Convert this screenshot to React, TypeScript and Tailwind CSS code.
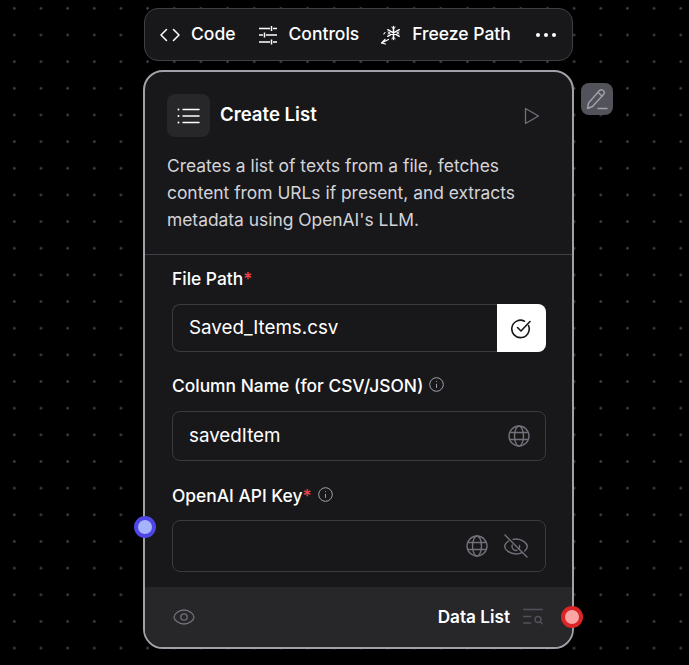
import React from "react";

function CodeIcon() {
  return (
    <svg width="20" height="20" viewBox="0 0 20 20" fill="none" stroke="currentColor" strokeWidth="1.500" strokeLinecap="round" strokeLinejoin="round">
      <path d="M6.500 4.500 1 10l5.500 5.500" />
      <path d="M13.500 4.500 19 10l-5.500 5.500" />
    </svg>
  );
}

function ControlsIcon() {
  return (
    <svg width="20" height="20" viewBox="0 0 20 20" fill="none" stroke="currentColor" strokeWidth="1.500">
      <path d="M1 3.500h11M15 3.500h4M13.500 1v5" />
      <path d="M1 10h4M8 10h11M6.500 7.500v5" />
      <path d="M1 17h11M15 17h4M13.500 14.500v5" />
    </svg>
  );
}

function FreezeIcon() {
  return (
    <svg width="21" height="20" viewBox="0 0 21 20" fill="none" stroke="currentColor" strokeWidth="1.500" strokeLinecap="round" strokeLinejoin="round">
      <path d="M13.500 1.500v13M7.800 4.700l11.400 6.600M19.200 4.700 7.800 11.300" />
      <path d="M11.800 2.300l1.700 1.400 1.700-1.400M11.800 13.700l1.700-1.400 1.700 1.400M8 7l2.300 1L8 9M19 7l-2.300 1 2.300 1" strokeWidth="1" />
      <path d="M8.500 14.500 1.500 18M1.500 18l3.500-3.500M1.500 18l4 1" strokeWidth="1.200" />
      <path d="M5 7.500 3.800 9" strokeWidth="1.100" />
    </svg>
  );
}

function ListIcon() {
  return (
    <svg width="24" height="24" viewBox="0 0 24 24" fill="none" stroke="currentColor" strokeWidth="1.500" strokeLinecap="round">
      <path d="M6 5.500h16M6 12h16M6 18.500h16" />
      <path d="M1.500 5.500h.01M1.500 12h.01M1.500 18.500h.01" strokeWidth="2" />
    </svg>
  );
}

function PlayIcon() {
  return (
    <svg width="16" height="18" viewBox="0 0 16 18" fill="none" stroke="currentColor" strokeWidth="1.300" strokeLinejoin="round">
      <path d="M1.500 1.500v15L14.500 9z" />
    </svg>
  );
}

function PencilIcon() {
  return (
    <svg width="24" height="24" viewBox="0 0 24 24" fill="none" stroke="currentColor" strokeWidth="1.400" strokeLinecap="round" strokeLinejoin="round">
      <path d="M2.500 21.500 3.500 16 14.500 3.500a2.400 2.400 0 0 1 3.400-.2l.6.500a2.400 2.400 0 0 1 .2 3.400L7.500 19.500z" />
      <path d="M13 5.500l4 3.500" />
      <path d="M13 21.500h9" />
    </svg>
  );
}

function CheckCircleIcon() {
  return (
    <svg width="21" height="21" viewBox="0 0 21 21" fill="none" stroke="#18181b" strokeWidth="1.600" strokeLinecap="round" strokeLinejoin="round">
      <path d="M17.500 7.500a8.700 8.700 0 1 1-4-4.300" />
      <path d="M6.500 9.500l3.500 3.500L19 3.500" />
    </svg>
  );
}

function InfoIcon() {
  return (
    <svg width="15" height="15" viewBox="0 0 15 15" fill="none" stroke="#a1a1aa" strokeWidth="1">
      <circle cx="7.500" cy="7.500" r="6.800" />
      <path d="M7.500 6.800v4" />
      <path d="M7.500 4.200v.8" />
    </svg>
  );
}

function GlobeIcon() {
  return (
    <svg width="22" height="22" viewBox="0 0 22 22" fill="none" stroke="#71717a" strokeWidth="1.400">
      <circle cx="11" cy="11" r="10" />
      <ellipse cx="11" cy="11" rx="4.500" ry="10" />
      <path d="M1.800 7.500h18.400M1.800 14.500h18.400" />
    </svg>
  );
}

function EyeOffIcon() {
  return (
    <svg width="26" height="26" viewBox="0 0 26 26" fill="none" stroke="#71717a" strokeWidth="1.400" strokeLinecap="round">
      <path d="M2 2l22 22" />
      <path d="M5.500 8C3.200 9.800 1.700 12 1.700 13.500c0 3 5 7.500 11.300 7.500 2.300 0 4.300-.5 6-1.400M10 6.400c1-.3 2-.4 3-.4 6.300 0 11.300 4.500 11.300 7.500 0 1.300-1 3-2.600 4.500" />
      <path d="M16.500 12.500A4 4 0 0 1 16 16M9.200 12a4 4 0 0 0 4.800 5.300" />
    </svg>
  );
}

function EyeIcon() {
  return (
    <svg width="22" height="16" viewBox="0 0 22 16" fill="none" stroke="#71717a" strokeWidth="1.300">
      <path d="M11 1C5.500 1 1 5.300 1 8s4.500 7 10 7 10-4.300 10-7-4.500-7-10-7z" />
      <circle cx="11" cy="8" r="3.200" />
    </svg>
  );
}

function ListSearchIcon() {
  return (
    <svg width="20" height="17" viewBox="0 0 20 17" fill="none" stroke="#52525b" strokeWidth="1.400" strokeLinecap="round">
      <path d="M.7 1.500h18.600M.7 8.500h7M.7 15h7" />
      <circle cx="15" cy="11.500" r="3" />
      <path d="M17.500 14 19 15.800" />
    </svg>
  );
}

function FieldLabel({ text, required, info }: { text: string; required?: boolean; info?: boolean }) {
  return (
    <div className="flex items-center h-6 text-[17.4px] font-medium text-white">
      <span>{text}</span>
      {required && <span className="text-[#ef4444]">*</span>}
      {info && (
        <span className="ml-[6px] -mt-[3px]">
          <InfoIcon />
        </span>
      )}
    </div>
  );
}

function Handle({ ring, fill, className }: { ring: string; fill: string; className: string }) {
  return <div className={`absolute w-[22px] h-[22px] rounded-full border-4 ${ring} ${fill} ${className}`} />;
}

export default function App() {
  return (
    <div
      className="relative w-[689px] h-[665px] overflow-hidden bg-black bg-[radial-gradient(circle,#4b4b50_0,#3a3a3e_1px,transparent_1.6px)] bg-[size:26.67px_26.67px] bg-[position:1px_-5px] text-white font-['Inter',sans-serif]"
    >
      {/* toolbar */}
      <div className="absolute left-[144px] top-[8px] w-[429px] h-[53px] flex items-center pl-[15px] bg-[#18181b] border border-[#3f3f46] rounded-[14px] text-[17.5px] font-medium">
        <div className="flex items-center gap-[11px]">
          <CodeIcon />
          <span>Code</span>
        </div>
        <div className="ml-[22px] flex items-center gap-[11px]">
          <ControlsIcon />
          <span>Controls</span>
        </div>
        <div className="ml-[21px] flex items-center gap-[11px]">
          <FreezeIcon />
          <span>Freeze Path</span>
        </div>
        <div className="ml-[25px] flex items-center gap-[4px]">
          <span className="w-[4px] h-[4px] rounded-full bg-white" />
          <span className="w-[4px] h-[4px] rounded-full bg-white" />
          <span className="w-[4px] h-[4px] rounded-full bg-white" />
        </div>
      </div>

      {/* node */}
      <div className="absolute left-[143px] top-[70px] w-[431px] h-[579px] flex flex-col bg-[#18181b] border-2 border-[#a1a1aa] rounded-[20px] overflow-hidden">
        <div className="flex flex-col px-[22px] pt-[22px] h-[183px] border-b border-[#3f3f46]">
          <div className="flex items-center">
            <div className="w-[43px] h-[43px] flex items-center justify-center bg-[#27272a] rounded-lg">
              <ListIcon />
            </div>
            <span className="ml-[10px] -mt-[2px] text-[18.6px] font-semibold">Create List</span>
            <span className="ml-auto mr-[10px] text-[#71717a]">
              <PlayIcon />
            </span>
          </div>
          <p className="mt-[15px] text-[17.4px] leading-[27px] text-[#d4d4d8]">
            Creates a list of texts from a file, fetches content from URLs if present, and extracts metadata using OpenAI's LLM.
          </p>
        </div>

        <div className="flex-1 flex flex-col px-[27px] pt-[12px]">
          <FieldLabel text="File Path" required />
          <div className="mt-[13px] flex h-[48px] w-[374px]">
            <div className="flex-1 flex items-center pl-4 border border-r-0 border-[#3a3a3f] rounded-l-lg text-[18.8px]">
              Saved_Items.csv
            </div>
            <div className="w-[49px] flex items-center justify-center bg-white rounded-r-lg">
              <CheckCircleIcon />
            </div>
          </div>

          <div className="mt-[22px]">
            <FieldLabel text="Column Name (for CSV/JSON)" info />
          </div>
          <div className="mt-[13px] flex items-center justify-between h-[50px] w-[374px] pl-4 pr-[15px] border border-[#3a3a3f] rounded-lg text-[18.8px]">
            <span>savedItem</span>
            <GlobeIcon />
          </div>

          <div className="mt-[23px]">
            <FieldLabel text="OpenAI API Key" required info />
          </div>
          <div className="mt-[12px] flex items-center justify-end gap-[15px] h-[52px] w-[374px] pr-[16px] border border-[#3a3a3f] rounded-lg">
            <GlobeIcon />
            <EyeOffIcon />
          </div>
        </div>

        <div className="h-[60px] flex items-center justify-between pl-[28px] pr-[29px] bg-[#27272a]">
          <EyeIcon />
          <div className="flex items-center gap-[13px]">
            <span className="text-[17.2px] font-semibold">Data List</span>
            <ListSearchIcon />
          </div>
        </div>
      </div>

      {/* edit button */}
      <div className="absolute left-[581px] top-[83px] w-[32px] h-[32px] flex items-center justify-center bg-[#52525b] rounded-lg text-[#a1a1aa]">
        <PencilIcon />
      </div>

      <Handle ring="border-[#4f46e5]" fill="bg-[#a5b4fc]" className="left-[134px] top-[516px]" />
      <Handle ring="border-[#dc2626]" fill="bg-[#fca5a5]" className="left-[561px] top-[606px]" />
    </div>
  );
}
